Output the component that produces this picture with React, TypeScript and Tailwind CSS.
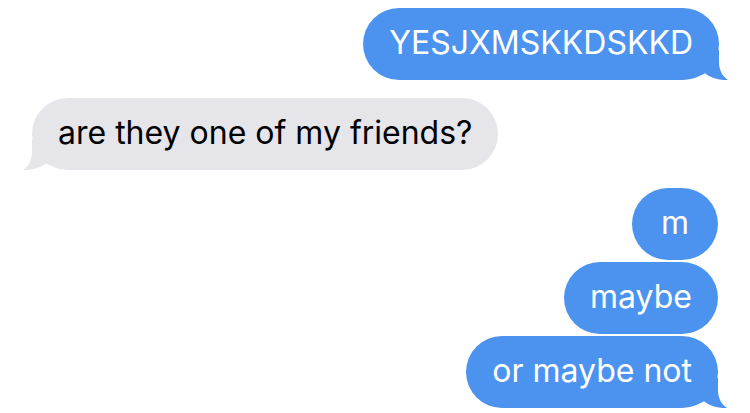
const BLUE = "bg-[#4c93f0]";

function Tail({ side, color }: { side: "left" | "right"; color: string }) {
  return (
    <svg
      aria-hidden="true"
      viewBox="0 0 30 30"
      className={
        side === "right"
          ? "pointer-events-none absolute -right-[9px] bottom-0 h-[30px] w-[30px]"
          : "pointer-events-none absolute -left-[9px] bottom-0 h-[30px] w-[30px] -scale-x-100"
      }
    >
      <path
        d="M0 0 H21 V12 C21 20 24.5 26.5 30 30 C22 30.6 13 28 7 23.2 C4.5 24.5 2 25.5 0 26 Z"
        fill={color}
      />
    </svg>
  );
}

function Bubble({
  text,
  mine,
  tail,
}: {
  text: string;
  mine: boolean;
  tail?: boolean;
}) {
  return (
    <div
      className={`relative flex h-[72px] min-w-[86px] items-center justify-center rounded-full px-[26px] text-[32px] leading-none ${
        mine ? `${BLUE} text-white` : "bg-[#e5e5ea] text-black"
      }`}
    >
      <span className="relative z-10 -mt-[2px]">{text}</span>
      {tail ? (
        <Tail side={mine ? "right" : "left"} color={mine ? "#4c93f0" : "#e5e5ea"} />
      ) : null}
    </div>
  );
}

export default function App() {
  return (
    <div
      className="flex h-[413px] w-[750px] flex-col overflow-hidden bg-white pt-[8px]"
      style={{ fontFamily: "Inter, 'Open Sans', sans-serif" }}
    >
      <div className="flex justify-end pr-[31px]">
        <Bubble text="YESJXMSKKDSKKD" mine tail />
      </div>

      <div className="mt-[18px] flex justify-start pl-[32px]">
        <Bubble text="are they one of my friends?" mine={false} tail />
      </div>

      <div className="mt-[18px] flex flex-col items-end gap-[2px] pr-[32px]">
        <Bubble text="m" mine />
        <Bubble text="maybe" mine />
        <Bubble text="or maybe not" mine tail />
      </div>
    </div>
  );
}
